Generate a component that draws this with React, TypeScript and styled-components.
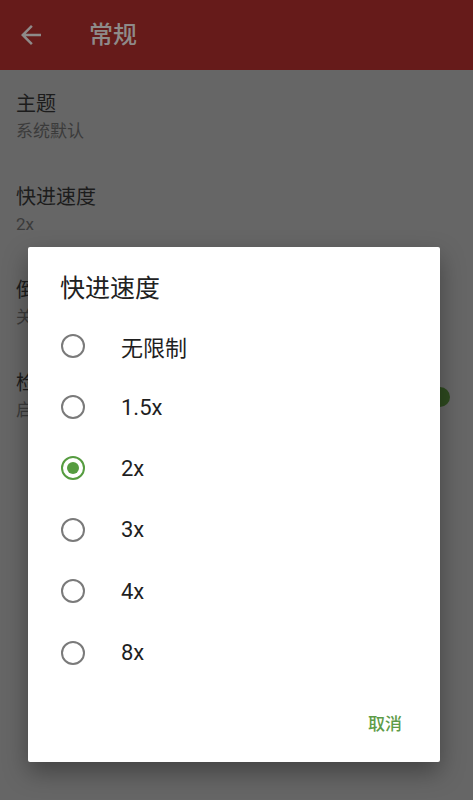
import React, { useState } from "react";
import styled, { createGlobalStyle } from "styled-components";

const GlobalStyle = createGlobalStyle`
  html, body {
    margin: 0;
    padding: 0;
    background: #666666;
  }
  body {
    font-family: Roboto, "Noto Sans CJK SC", sans-serif;
  }
`;

const Screen = styled.div`
  position: relative;
  width: 473px;
  height: 800px;
  overflow: hidden;
  background: #666666;
`;

const AppBar = styled.header`
  height: 70px;
  display: flex;
  align-items: center;
  padding-left: 16px;
  background: #661b1a;
  color: #8e8a89;
`;

const BackButton = styled.span`
  display: flex;
  width: 30px;
  height: 30px;
  svg {
    width: 30px;
    height: 30px;
    fill: currentColor;
  }
`;

const AppTitle = styled.h1`
  margin: 0 0 0 43px;
  font-size: 24px;
  font-weight: 500;
  line-height: 30px;
`;

const SettingList = styled.div`
  display: flex;
  flex-direction: column;
`;

const SettingRow = styled.div`
  height: 93px;
  box-sizing: border-box;
  padding: 20px 25px 0 16px;
  display: flex;
  align-items: flex-start;
`;

const SettingText = styled.div`
  flex: 1;
  display: flex;
  flex-direction: column;
`;

const SettingTitle = styled.div`
  font-size: 20px;
  line-height: 28px;
  color: #1c1c1c;
`;

const SettingValue = styled.div`
  font-size: 17px;
  line-height: 26px;
  color: #3b3b3b;
`;

const Switch = styled.div`
  position: relative;
  width: 36px;
  height: 14px;
  margin-top: 21px;
  border-radius: 7px;
  background: #3a4f2e;
  &::after {
    content: "";
    position: absolute;
    right: -2px;
    top: -3px;
    width: 20px;
    height: 20px;
    border-radius: 50%;
    background: #2e4a1f;
  }
`;

const Scrim = styled.div`
  position: absolute;
  inset: 0;
  padding: 247px 0 0 28px;
`;

const Dialog = styled.div`
  width: 412px;
  height: 515px;
  box-sizing: border-box;
  background: #ffffff;
  border-radius: 2px;
  box-shadow: 0 10px 24px rgba(0, 0, 0, 0.35);
  display: flex;
  flex-direction: column;
`;

const DialogTitle = styled.h2`
  margin: 0;
  padding: 24px 32px 0;
  font-size: 25px;
  font-weight: 400;
  line-height: 36px;
  color: #212121;
`;

const Options = styled.div`
  margin-top: 8px;
  display: flex;
  flex-direction: column;
`;

const Option = styled.label`
  height: 61.4px;
  display: flex;
  align-items: center;
  padding-left: 33px;
  cursor: pointer;
`;

const Radio = styled.span<{ $checked: boolean }>`
  position: relative;
  width: 24px;
  height: 24px;
  box-sizing: border-box;
  border-radius: 50%;
  border: 2px solid ${(p) => (p.$checked ? "#569c40" : "#7a7a7a")};
  &::after {
    content: "";
    display: ${(p) => (p.$checked ? "block" : "none")};
    position: absolute;
    left: 4px;
    top: 4px;
    width: 12px;
    height: 12px;
    border-radius: 50%;
    background: #569c40;
  }
`;

const OptionLabel = styled.span`
  margin-left: 36px;
  font-size: 22px;
  color: #1f1f1f;
`;

const DialogActions = styled.div`
  flex: 1;
  display: flex;
  align-items: center;
  justify-content: flex-end;
  padding-right: 30px;
`;

const TextButton = styled.button`
  border: none;
  background: none;
  padding: 6px 8px;
  font-family: inherit;
  font-size: 17px;
  font-weight: 500;
  color: #5e9c48;
  cursor: pointer;
`;

const ArrowBack = () => (
  <svg viewBox="0 0 24 24">
    <path d="M20 11H7.83l5.59-5.59L12 4l-8 8 8 8 1.41-1.41L7.83 13H20v-2z" />
  </svg>
);

const settings = [
  { title: "主题", value: "系统默认" },
  { title: "快进速度", value: "2x" },
  { title: "倒带速度", value: "关闭" },
  { title: "检查更新", value: "启动时检查", toggle: true },
];

const speeds = ["无限制", "1.5x", "2x", "3x", "4x", "8x"];

export default function App() {
  const [speed, setSpeed] = useState("2x");

  return (
    <Screen>
      <GlobalStyle />
      <AppBar>
        <BackButton>
          <ArrowBack />
        </BackButton>
        <AppTitle>常规</AppTitle>
      </AppBar>
      <SettingList>
        {settings.map((s) => (
          <SettingRow key={s.title}>
            <SettingText>
              <SettingTitle>{s.title}</SettingTitle>
              <SettingValue>{s.value}</SettingValue>
            </SettingText>
            {s.toggle && <Switch />}
          </SettingRow>
        ))}
      </SettingList>
      <Scrim>
        <Dialog>
          <DialogTitle>快进速度</DialogTitle>
          <Options>
            {speeds.map((v) => (
              <Option key={v} onClick={() => setSpeed(v)}>
                <Radio $checked={v === speed} />
                <OptionLabel>{v}</OptionLabel>
              </Option>
            ))}
          </Options>
          <DialogActions>
            <TextButton>取消</TextButton>
          </DialogActions>
        </Dialog>
      </Scrim>
    </Screen>
  );
}
